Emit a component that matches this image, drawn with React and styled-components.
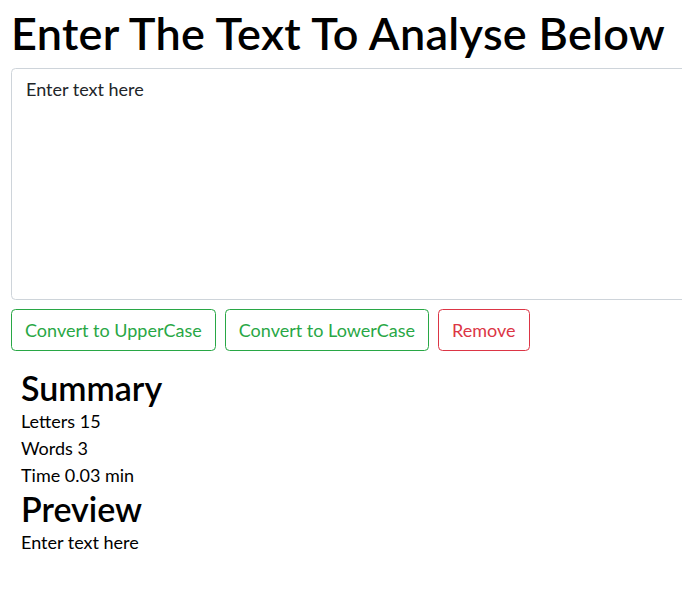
import React, { useState } from "react";
import styled, { createGlobalStyle } from "styled-components";

const Global = createGlobalStyle`
  html, body { margin: 0; padding: 0; background: #fff; overflow-x: hidden; }
  body {
    font-family: Lato, "Open Sans", sans-serif;
    font-size: 18px;
    line-height: 1.5;
    color: #212529;
  }
  * { box-sizing: border-box; }
`;

const Page = styled.div`
  width: 760px;
  padding: 6px 0 0 11px;
`;

const Title = styled.h1`
  margin: 0 0 8px 0;
  font-size: 45px;
  line-height: 54px;
  font-weight: 600;
  letter-spacing: 0.3px;
  color: #000;
`;

const TextBox = styled.textarea`
  display: block;
  width: 100%;
  height: 232px;
  margin: 0;
  padding: 7px 14px;
  font: inherit;
  color: #212529;
  border: 1px solid #ced4da;
  border-radius: 4.5px;
  resize: none;
  outline: none;
`;

const ButtonRow = styled.div`
  display: flex;
  gap: 9px;
  margin-top: 9px;
`;

const Button = styled.button`
  height: 42px;
  padding: 0 13px;
  font: inherit;
  background: #fff;
  color: ${(p) => p.$color};
  border: 1px solid ${(p) => p.$color};
  border-radius: 4.5px;
  cursor: pointer;
`;

const Section = styled.div`
  padding: 17px 0 0 10px;
`;

const SubTitle = styled.h2`
  margin: 0;
  font-size: 34px;
  line-height: 40px;
  font-weight: 600;
  color: #000;
`;

const Line = styled.p`
  margin: 0;
  line-height: 27px;
  color: #000;
`;

export default function App() {
  const [text, setText] = useState("Enter text here");
  const words = text.split(/\s+/).filter(Boolean).length;
  const letters = text.length;
  return (
    <>
      <Global />
      <Page>
        <Title>Enter The Text To Analyse Below</Title>
        <TextBox value={text} onChange={(e) => setText(e.target.value)} />
        <ButtonRow>
          <Button $color="#28a745" onClick={() => setText(text.toUpperCase())}>Convert to UpperCase</Button>
          <Button $color="#28a745" onClick={() => setText(text.toLowerCase())}>Convert to LowerCase</Button>
          <Button $color="#dc3545" onClick={() => setText("")}>Remove</Button>
        </ButtonRow>
        <Section>
          <SubTitle>Summary</SubTitle>
          <Line>Letters {letters}</Line>
          <Line>Words {words}</Line>
          <Line>Time {(0.008 * words + 0.006).toFixed(2)} min</Line>
          <SubTitle>Preview</SubTitle>
          <Line>{text}</Line>
        </Section>
      </Page>
    </>
  );
}
